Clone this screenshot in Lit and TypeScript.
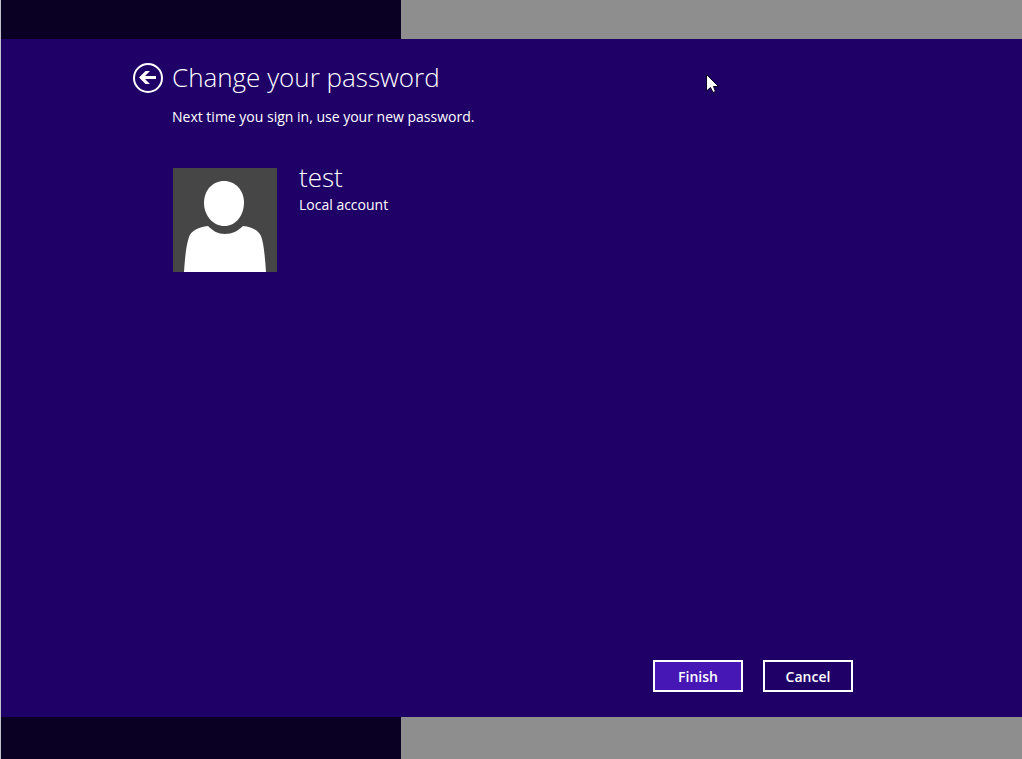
import { LitElement, html, css } from "lit";
import { customElement } from "lit/decorators.js";

@customElement("screen-band")
class ScreenBand extends LitElement {
  static styles = css`
    :host {
      display: flex;
      background: #8e8e8e;
    }
    .dark {
      width: 400px;
      background: #0a0023;
    }
  `;

  render() {
    return html`<div class="dark"></div>`;
  }
}

@customElement("account-card")
class AccountCard extends LitElement {
  static properties = {
    name: { type: String },
    kind: { type: String },
  };
  declare name: string;
  declare kind: string;

  static styles = css`
    :host {
      display: flex;
      gap: 22px;
      align-items: flex-start;
    }
    .avatar {
      display: block;
      width: 104px;
      height: 104px;
      flex: none;
    }
    .name {
      margin: 0;
      font-size: 26px;
      line-height: 18px;
      font-weight: 300;
      padding-bottom: 9px;
    }
    .kind {
      margin: 0;
      font-size: 14px;
      line-height: 20px;
    }
  `;

  render() {
    return html`
      <svg class="avatar" viewBox="0 0 104 104" role="img" aria-label="Account picture">
        <rect width="104" height="104" fill="#464646" />
        <path
          fill="#fff"
          d="M51 13C62.500 13 71 22.500 71 34.500C71 47.500 62.500 58 51.500 58C40 58 31 47.500 31 35C31 22.500 39.500 13 51 13Z"
        />
        <path
          fill="#fff"
          d="M11 104C12 90 13 78 16 69C18 62.500 26 59 35 58C40 63 45 66 52 66C59 66 65 63 70 58C79 59 85 62 88 68C91 76 92 90 93 104Z"
        />
      </svg>
      <div>
        <h2 class="name">${this.name}</h2>
        <p class="kind">${this.kind}</p>
      </div>
    `;
  }
}

@customElement("app-root")
class AppRoot extends LitElement {
  static styles = css`
    :host {
      box-sizing: border-box;
      position: relative;
      display: grid;
      grid-template-rows: 39px 1fr 42px;
      min-height: 100vh;
      border-left: 1px solid #c4c2ca;
      color: #fff;
      font-family: "Open Sans", "Noto Sans", sans-serif;
    }
    .panel {
      display: flex;
      flex-direction: column;
      background: #1f0067;
      padding: 22px 169px 25px 132px;
    }
    .header {
      display: grid;
      grid-template-columns: 30px 1fr;
      column-gap: 9px;
      align-items: end;
    }
    .back {
      width: 30px;
      height: 30px;
      padding: 0;
      border: 0;
      background: none;
    }
    .back svg {
      display: block;
    }
    .title {
      margin: 0;
      font-size: 26px;
      line-height: 32px;
      font-weight: 300;
    }
    .note {
      grid-column: 2;
      margin: 0;
      padding-top: 14px;
      font-size: 14px;
      line-height: 20px;
    }
    .account {
      padding: 41px 0 0 40px;
    }
    .actions {
      display: flex;
      justify-content: flex-end;
      gap: 20px;
      margin-top: auto;
    }
    .button {
      width: 90px;
      height: 32px;
      padding: 2px 0 0;
      border: 2px solid #fff;
      background: transparent;
      color: #fff;
      font-family: inherit;
      font-size: 14px;
      font-weight: 600;
      line-height: 20px;
    }
    .primary {
      background: #4617b4;
    }
    .cursor {
      position: absolute;
      left: 705px;
      top: 74px;
    }
  `;

  render() {
    return html`
      <screen-band></screen-band>
      <main class="panel">
        <header class="header">
          <button class="back" type="button" aria-label="Back">
            <svg width="30" height="30" viewBox="0 0 30 30">
              <circle cx="15" cy="15" r="14" fill="none" stroke="#fff" stroke-width="2" />
              <path fill="#fff" d="M6 14.500L12.500 8H17L12 13H23V16H12L17 21H12.500Z" />
            </svg>
          </button>
          <h1 class="title">Change your password</h1>
          <p class="note">Next time you sign in, use your new password.</p>
        </header>
        <account-card class="account" name="test" kind="Local account"></account-card>
        <div class="actions">
          <button class="button primary" type="button">Finish</button>
          <button class="button" type="button">Cancel</button>
        </div>
      </main>
      <screen-band></screen-band>
      <svg class="cursor" width="13" height="20" viewBox="0 0 13 20" aria-hidden="true">
        <path
          fill="#fff"
          stroke="#0a0023"
          stroke-width="1"
          d="M.5 .5V17L4.500 13.500L7 18.500L9.500 17.500L7.500 12.500H12.500Z"
        />
      </svg>
    `;
  }
}
